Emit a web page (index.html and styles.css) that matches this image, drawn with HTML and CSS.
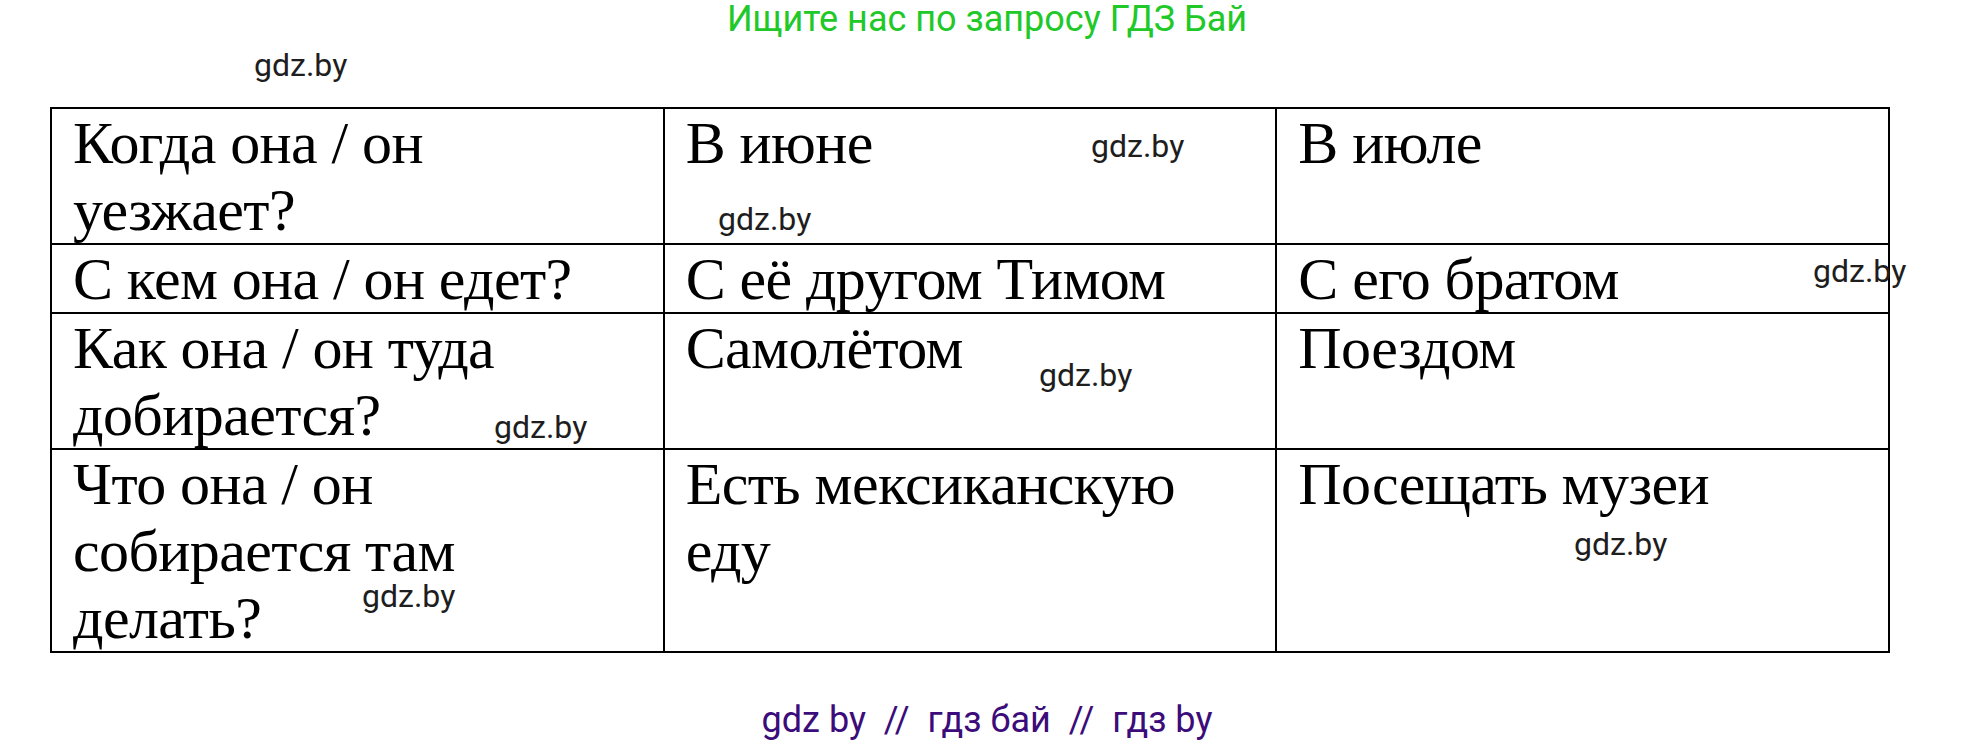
FILE: index.html
```html
<!DOCTYPE html>
<html lang="ru">
<head>
<meta charset="utf-8">
<title>ГДЗ</title>
<link rel="stylesheet" href="styles.css">
</head>
<body>
<div class="page">
  <div class="top">Ищите нас по запросу ГДЗ Бай</div>
  <div class="grid">
    <div class="cell"><p>Когда она / он<br>уезжает?</p></div>
    <div class="cell"><p>В июне</p></div>
    <div class="cell"><p>В июле</p></div>
    <div class="cell"><p>С кем она / он едет?</p></div>
    <div class="cell"><p>С её другом Тимом</p></div>
    <div class="cell"><p>С его братом</p></div>
    <div class="cell"><p>Как она / он туда<br>добирается?</p></div>
    <div class="cell"><p>Самолётом</p></div>
    <div class="cell"><p>Поездом</p></div>
    <div class="cell"><p>Что она / он<br>собирается там<br>делать?</p></div>
    <div class="cell"><p>Есть мексиканскую<br>еду</p></div>
    <div class="cell"><p>Посещать музеи</p></div>
  </div>
  <div class="foot">gdz by  //  гдз бай  //  гдз by</div>

  <span class="wm wm1">gdz.by</span>
  <span class="wm wm2">gdz.by</span>
  <span class="wm wm3">gdz.by</span>
  <span class="wm wm4">gdz.by</span>
  <span class="wm wm5">gdz.by</span>
  <span class="wm wm6">gdz.by</span>
  <span class="wm wm7">gdz.by</span>
  <span class="wm wm8">gdz.by</span>
</div>
</body>
</html>
```

FILE: styles.css
```css
html, body {
  margin: 0;
  padding: 0;
  background: #ffffff;
}

.page {
  position: relative;
  width: 1974px;
  height: 743px;
  overflow: hidden;
}

.top {
  font-family: Roboto, "Noto Sans", sans-serif;
  font-size: 36px;
  line-height: 38px;
  color: #20c828;
  text-align: center;
}

.grid {
  display: grid;
  grid-template-columns: repeat(3, 1fr);
  box-sizing: border-box;
  width: 1840px;
  margin: 69px 0 0 50px;
  border-top: 2px solid #000;
  border-left: 2px solid #000;
}

.cell {
  border-right: 2px solid #000;
  border-bottom: 2px solid #000;
  padding: 1px 10px 0 21px;
  font-family: "Liberation Serif", "Times New Roman", serif;
  font-size: 60px;
  line-height: 67px;
  color: #000;
  letter-spacing: -0.6px;
  white-space: nowrap;
}

.cell p {
  margin: 0 0 -1px;
}

.foot {
  font-family: Roboto, "Noto Sans", sans-serif;
  font-size: 36px;
  line-height: 40px;
  color: #3c0c7a;
  text-align: center;
  white-space: pre;
  margin-top: 47px;
}

.wm {
  position: absolute;
  font-family: Roboto, "Noto Sans", sans-serif;
  font-size: 32px;
  line-height: 32px;
  color: #1e1e1e;
  white-space: nowrap;
}

.wm1 { left: 254px; top: 49px; }
.wm2 { left: 1091px; top: 130px; }
.wm3 { left: 718px; top: 203px; }
.wm4 { left: 1813px; top: 255px; }
.wm5 { left: 1039px; top: 359px; }
.wm6 { left: 494px; top: 411px; }
.wm7 { left: 362px; top: 580px; }
.wm8 { left: 1574px; top: 528px; }
```
